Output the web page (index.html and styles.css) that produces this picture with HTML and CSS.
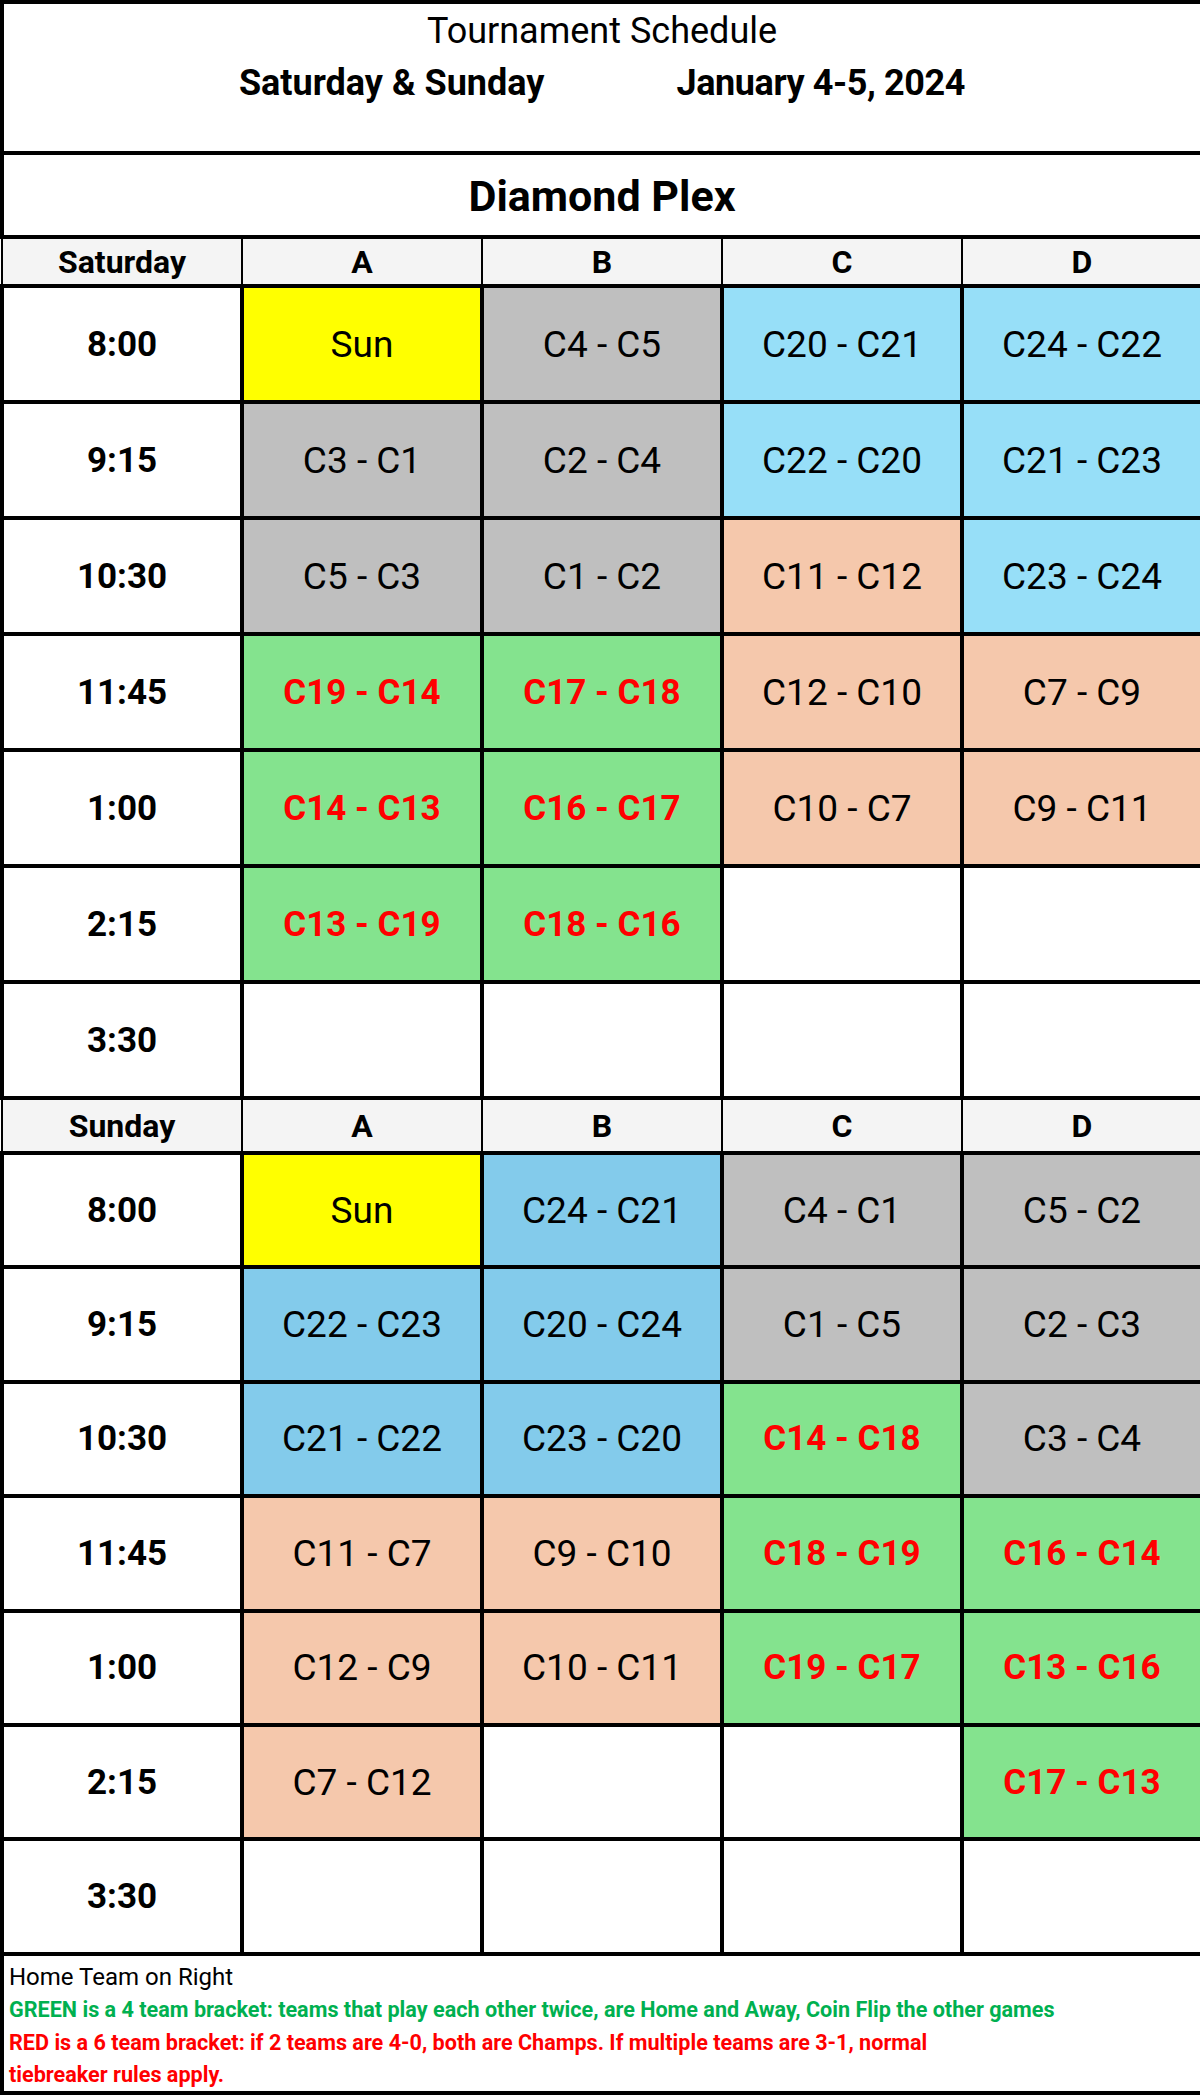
FILE: index.html
```html
<!DOCTYPE html>
<html>
<head>
<meta charset="utf-8">
<title>Tournament Schedule</title>
<link rel="stylesheet" href="styles.css">
</head>
<body>
<table class="sheet">
  <colgroup>
    <col class="c-time"><col class="c-f"><col class="c-f"><col class="c-f"><col class="c-f">
  </colgroup>
  <tbody>
    <tr class="r-title">
      <td colspan="5" class="title-cell">
        <div class="title">Tournament Schedule</div>
        <div class="subtitle"><span>Saturday &amp; Sunday</span><span>January 4-5, 2024</span></div>
      </td>
    </tr>
    <tr class="r-venue">
      <td colspan="5" class="venue">Diamond Plex</td>
    </tr>

    <tr class="r-head">
      <th>Saturday</th><th>A</th><th>B</th><th>C</th><th>D</th>
    </tr>
    <tr class="r-sat">
      <td class="time">8:00</td><td class="sun">Sun</td><td class="gray">C4 - C5</td><td class="blue">C20 - C21</td><td class="blue">C24 - C22</td>
    </tr>
    <tr class="r-sat">
      <td class="time">9:15</td><td class="gray">C3 - C1</td><td class="gray">C2 - C4</td><td class="blue">C22 - C20</td><td class="blue">C21 - C23</td>
    </tr>
    <tr class="r-sat">
      <td class="time">10:30</td><td class="gray">C5 - C3</td><td class="gray">C1 - C2</td><td class="peach">C11 - C12</td><td class="blue">C23 - C24</td>
    </tr>
    <tr class="r-sat">
      <td class="time">11:45</td><td class="green">C19 - C14</td><td class="green">C17 - C18</td><td class="peach">C12 - C10</td><td class="peach">C7 - C9</td>
    </tr>
    <tr class="r-sat">
      <td class="time">1:00</td><td class="green">C14 - C13</td><td class="green">C16 - C17</td><td class="peach">C10 - C7</td><td class="peach">C9 - C11</td>
    </tr>
    <tr class="r-sat">
      <td class="time">2:15</td><td class="green">C13 - C19</td><td class="green">C18 - C16</td><td></td><td></td>
    </tr>
    <tr class="r-sat">
      <td class="time">3:30</td><td></td><td></td><td></td><td></td>
    </tr>

    <tr class="r-head r-head2">
      <th>Sunday</th><th>A</th><th>B</th><th>C</th><th>D</th>
    </tr>
    <tr class="r-sun">
      <td class="time">8:00</td><td class="sun">Sun</td><td class="blue2">C24 - C21</td><td class="gray">C4 - C1</td><td class="gray">C5 - C2</td>
    </tr>
    <tr class="r-sun">
      <td class="time">9:15</td><td class="blue2">C22 - C23</td><td class="blue2">C20 - C24</td><td class="gray">C1 - C5</td><td class="gray">C2 - C3</td>
    </tr>
    <tr class="r-sun">
      <td class="time">10:30</td><td class="blue2">C21 - C22</td><td class="blue2">C23 - C20</td><td class="green">C14 - C18</td><td class="gray">C3 - C4</td>
    </tr>
    <tr class="r-sun">
      <td class="time">11:45</td><td class="peach">C11 - C7</td><td class="peach">C9 - C10</td><td class="green">C18 - C19</td><td class="green">C16 - C14</td>
    </tr>
    <tr class="r-sun">
      <td class="time">1:00</td><td class="peach">C12 - C9</td><td class="peach">C10 - C11</td><td class="green">C19 - C17</td><td class="green">C13 - C16</td>
    </tr>
    <tr class="r-sun">
      <td class="time">2:15</td><td class="peach">C7 - C12</td><td></td><td></td><td class="green">C17 - C13</td>
    </tr>
    <tr class="r-sun">
      <td class="time">3:30</td><td></td><td></td><td></td><td></td>
    </tr>

    <tr class="r-foot">
      <td colspan="5" class="foot">
        <div class="note">Home Team on Right</div>
        <div class="note-green">GREEN is a 4 team bracket: teams that play each other twice, are Home and Away, Coin Flip the other games</div>
        <div class="note-red">RED is a 6 team bracket: if 2 teams are 4-0, both are Champs. If multiple teams are 3-1, normal<br>tiebreaker rules apply.</div>
      </td>
    </tr>
  </tbody>
</table>
</body>
</html>
```

FILE: styles.css
```css
html, body {
  margin: 0;
  padding: 0;
  background: #ffffff;
}

body {
  font-family: Roboto, "Liberation Sans", Arial, sans-serif;
  color: #000;
}

.sheet {
  width: 1200px;
  border-collapse: collapse;
  table-layout: fixed;
}

.sheet td,
.sheet th {
  border: 4px solid #000;
  padding: 0;
  text-align: center;
  vertical-align: middle;
  font-size: 37px;
  font-weight: 400;
  overflow: hidden;
  white-space: nowrap;
}

.c-time { width: 240px; }
.c-f { width: 240px; }

.r-title { height: 151px; }
.sheet .title-cell {
  vertical-align: top;
}
.title {
  font-size: 36px;
  line-height: 40px;
  padding-top: 7px;
}
.subtitle {
  display: flex;
  justify-content: center;
  gap: 132px;
  font-size: 36px;
  font-weight: 700;
  line-height: 40px;
  margin-top: 12px;
}
.subtitle span:last-child {
  letter-spacing: -0.4px;
}

.r-venue { height: 84px; }
.sheet .venue {
  font-size: 43px;
  font-weight: 700;
  padding-top: 2px;
}

.r-head { height: 49px; }
.r-head2 { height: 55px; }
.sheet .r-head th {
  background: #f4f4f4;
  font-size: 32px;
  font-weight: 700;
  border-left-width: 2px;
  border-right-width: 2px;
}

.r-sat { height: 116px; }
.r-sun { height: 114.4px; }

.sheet .time {
  font-weight: 700;
  font-size: 35px;
}

.sun { background: #ffff00; }
.gray { background: #bfbfbf; }
.blue { background: #97dff8; }
.blue2 { background: #83cbeb; }
.peach { background: #f5c8ac; }
.sheet .green {
  background: #84e38e;
  color: #ff0000;
  font-weight: 700;
  font-size: 35px;
}

.r-foot { height: 137px; }
.sheet .foot {
  text-align: left;
  vertical-align: top;
  padding: 5px 0 0 5px;
  white-space: normal;
}
.note {
  font-size: 24px;
  line-height: 32px;
}
.note-green {
  color: #00b050;
  font-size: 21.6px;
  font-weight: 700;
  line-height: 34px;
}
.note-red {
  color: #ff0000;
  font-size: 21.6px;
  font-weight: 700;
  line-height: 32px;
}
```
